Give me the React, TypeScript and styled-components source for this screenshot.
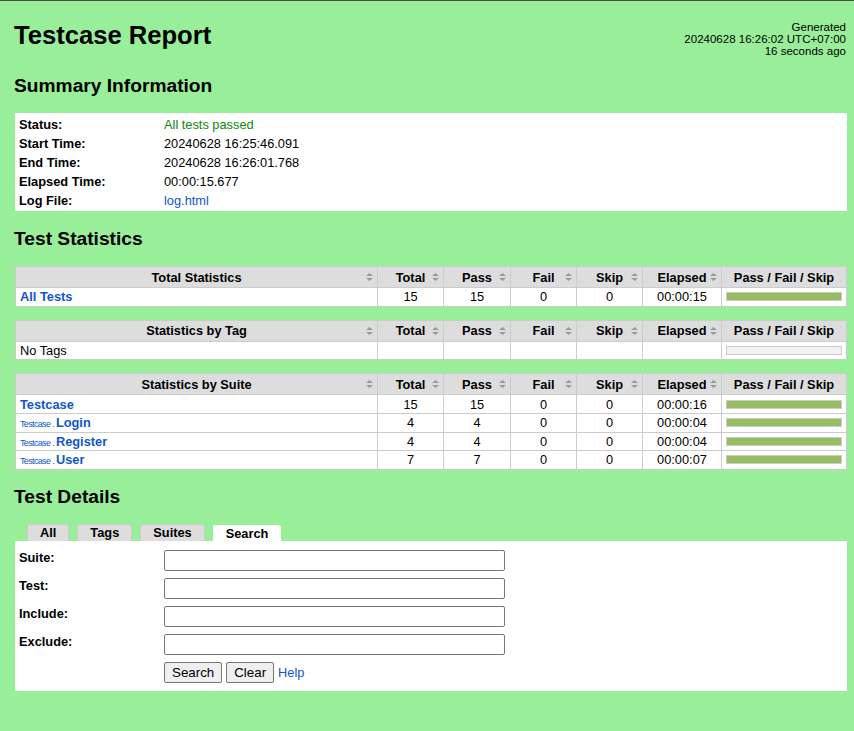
import React from 'react';
import styled, { createGlobalStyle } from 'styled-components';

/*
 * Styles.
 */

const GlobalStyle = createGlobalStyle`
  html, body {
    margin: 0;
    padding: 0;
    background: #99ee99;
  }

  body {
    font-family: "Liberation Sans", Helvetica, Arial, sans-serif;
    font-size: 12.8px;
    color: #000;
  }
`;

const Page = styled.div`
  min-height: 731px;
  box-sizing: border-box;
  border-top: 1px solid #4a4a4a;
  padding: 19px 8px 40px 14px;
`;

const Header = styled.header`
  display: flex;
  justify-content: space-between;
  align-items: flex-start;
`;

const Title = styled.h1`
  margin: 0;
  font-size: 25.6px;
  line-height: 30px;
  font-weight: bold;
`;

const Generated = styled.div`
  margin-top: 1px;
  font-size: 11.52px;
  line-height: 12px;
  text-align: right;
  white-space: nowrap;
`;

const Heading = styled.h2<{ $top?: number; $bottom?: number }>`
  margin: ${(p) => p.$top ?? 17}px 0 ${(p) => p.$bottom ?? 16}px 0;
  font-size: 19.2px;
  line-height: 22px;
  font-weight: bold;
`;

const Link = styled.a`
  color: #15c;
  text-decoration: none;
  cursor: pointer;
`;

const Summary = styled.div`
  width: 832px;
  margin-left: 1px;
  padding: 2px 0 1px 0;
  background: #fff;
  display: grid;
  grid-template-columns: 149px auto;
`;

const SummaryLabel = styled.div`
  padding-left: 4px;
  font-weight: bold;
  line-height: 19px;
`;

const SummaryValue = styled.div<{ $pass?: boolean }>`
  line-height: 19px;
  color: ${(p) => (p.$pass ? '#098a09' : '#000')};
`;

const StatsTable = styled.table`
  width: 832px;
  margin: 0 0 12.8px 1px;
  border-collapse: collapse;
  table-layout: fixed;
  background: #fff;
  font-size: 12.8px;
`;

const HeadCell = styled.th`
  position: relative;
  background: #ddd;
  border: 1px solid #ccc;
  padding: 2.56px 4px;
  line-height: 15px;
  font-weight: bold;
  text-align: center;
  white-space: nowrap;
  overflow: hidden;
`;

const SortIcon = styled.svg`
  position: absolute;
  right: 4px;
  top: 50%;
  margin-top: -4px;
  width: 7px;
  height: 8px;
`;

const Cell = styled.td<{ $center?: boolean }>`
  border: 1px solid #ccc;
  padding: 1.33px 4px;
  line-height: 15px;
  vertical-align: middle;
  text-align: ${(p) => (p.$center ? 'center' : 'left')};
  white-space: nowrap;
`;

const StatName = styled(Link)`
  font-weight: bold;
`;

const ParentName = styled.span`
  font-size: 8.96px;
  line-height: 1;
  letter-spacing: -0.07em;
  font-weight: normal;
`;

const Graph = styled.div<{ $empty?: boolean }>`
  display: flex;
  height: 7px;
  border: 1px solid #ccc;
  background: ${(p) => (p.$empty ? '#f2f2f2' : '#ce3e01')};
`;

const PassBar = styled.div`
  height: 100%;
  background: #97bd61;
`;

const TabBar = styled.div`
  display: flex;
  align-items: flex-end;
  gap: 8px;
  height: 17px;
  margin-left: 1px;
  padding-left: 12px;
`;

const Tab = styled.div<{ $active?: boolean }>`
  box-sizing: border-box;
  height: ${(p) => (p.$active ? 16 : 17)}px;
  padding: 0 12px;
  border: 1px solid ${(p) => (p.$active ? '#fff' : '#ccc')};
  border-bottom: none;
  border-radius: 3px 3px 0 0;
  background: ${(p) => (p.$active ? '#fff' : '#ddd')};
  font-weight: bold;
  line-height: 15px;
  cursor: pointer;
`;

const Panel = styled.div`
  width: 832px;
  margin-left: 1px;
  padding: 9px 0 8px 0;
  background: #fff;
  display: grid;
  grid-template-columns: 149px auto;
  row-gap: 7px;
`;

const FieldLabel = styled.label`
  padding-left: 4px;
  font-weight: bold;
  line-height: 15px;
  align-self: start;
`;

const Input = styled.input`
  box-sizing: border-box;
  width: 341px;
  height: 21px;
  margin: 0;
  padding: 1px 2px;
  border: 1px solid #767676;
  border-radius: 2px;
  font-family: "Liberation Sans", Arial, sans-serif;
  font-size: 13.33px;
  background: #fff;
`;

const Actions = styled.div`
  grid-column: 2;
  display: flex;
  align-items: center;
  gap: 4px;
`;

const Button = styled.button`
  box-sizing: border-box;
  height: 21px;
  margin: 0;
  padding: 1px 7px;
  border: 1px solid #767676;
  border-radius: 2px;
  background: #efefef;
  color: #000;
  font-family: "Liberation Sans", Arial, sans-serif;
  font-size: 13.33px;
  line-height: 17px;
`;

/*
 * Data.
 */

type Stat = {
  parent?: string;
  name: string;
  link?: boolean;
  total?: number;
  pass?: number;
  fail?: number;
  skip?: number;
  elapsed?: string;
};

const totalStats: Stat[] = [
  { name: 'All Tests', link: true, total: 15, pass: 15, fail: 0, skip: 0, elapsed: '00:00:15' }
];

const tagStats: Stat[] = [{ name: 'No Tags' }];

const suiteStats: Stat[] = [
  { name: 'Testcase', link: true, total: 15, pass: 15, fail: 0, skip: 0, elapsed: '00:00:16' },
  { parent: 'Testcase', name: 'Login', link: true, total: 4, pass: 4, fail: 0, skip: 0, elapsed: '00:00:04' },
  { parent: 'Testcase', name: 'Register', link: true, total: 4, pass: 4, fail: 0, skip: 0, elapsed: '00:00:04' },
  { parent: 'Testcase', name: 'User', link: true, total: 7, pass: 7, fail: 0, skip: 0, elapsed: '00:00:07' }
];

/*
 * Components.
 */

function Sort() {
  return (
    <SortIcon viewBox="0 0 7 8">
      <polygon points="0,3 3.5,0 7,3" fill="#999" />
      <polygon points="0,5 3.5,8 7,5" fill="#999" />
    </SortIcon>
  );
}

function StatsBlock({ title, rows }: { title: string; rows: Stat[] }) {
  return (
    <StatsTable>
      <colgroup>
        <col />
        <col style={{ width: 66 }} />
        <col style={{ width: 67 }} />
        <col style={{ width: 66 }} />
        <col style={{ width: 66 }} />
        <col style={{ width: 79 }} />
        <col style={{ width: 125 }} />
      </colgroup>
      <thead>
        <tr>
          <HeadCell>{title}<Sort /></HeadCell>
          <HeadCell>{'Total'}<Sort /></HeadCell>
          <HeadCell>{'Pass'}<Sort /></HeadCell>
          <HeadCell>{'Fail'}<Sort /></HeadCell>
          <HeadCell>{'Skip'}<Sort /></HeadCell>
          <HeadCell>{'Elapsed'}<Sort /></HeadCell>
          <HeadCell>{'Pass / Fail / Skip'}</HeadCell>
        </tr>
      </thead>
      <tbody>
        {rows.map((row) => (
          <tr key={`${row.parent ?? ''}${row.name}`}>
            <Cell>
              {row.link ? (
                <StatName>
                  {row.parent && <ParentName>{`${row.parent} . `}</ParentName>}
                  {row.name}
                </StatName>
              ) : (
                row.name
              )}
            </Cell>
            <Cell $center>{row.total}</Cell>
            <Cell $center>{row.pass}</Cell>
            <Cell $center>{row.fail}</Cell>
            <Cell $center>{row.skip}</Cell>
            <Cell $center>{row.elapsed}</Cell>
            <Cell>
              {row.total ? (
                <Graph>
                  <PassBar style={{ width: `${((row.pass ?? 0) / row.total) * 100}%` }} />
                </Graph>
              ) : (
                <Graph $empty />
              )}
            </Cell>
          </tr>
        ))}
      </tbody>
    </StatsTable>
  );
}

export default function App() {
  return (
    <>
      <GlobalStyle />
      <Page>
        <Header>
          <Title>{'Testcase Report'}</Title>
          <Generated>
            {'Generated'}
            <br />
            {'20240628 16:26:02 UTC+07:00'}
            <br />
            {'16 seconds ago'}
          </Generated>
        </Header>

        <Heading $top={18}>{'Summary Information'}</Heading>
        <Summary>
          <SummaryLabel>{'Status:'}</SummaryLabel>
          <SummaryValue $pass>{'All tests passed'}</SummaryValue>
          <SummaryLabel>{'Start Time:'}</SummaryLabel>
          <SummaryValue>{'20240628 16:25:46.091'}</SummaryValue>
          <SummaryLabel>{'End Time:'}</SummaryLabel>
          <SummaryValue>{'20240628 16:26:01.768'}</SummaryValue>
          <SummaryLabel>{'Elapsed Time:'}</SummaryLabel>
          <SummaryValue>{'00:00:15.677'}</SummaryValue>
          <SummaryLabel>{'Log File:'}</SummaryLabel>
          <SummaryValue><Link>{'log.html'}</Link></SummaryValue>
        </Summary>

        <Heading>{'Test Statistics'}</Heading>
        <StatsBlock title="Total Statistics" rows={totalStats} />
        <StatsBlock title="Statistics by Tag" rows={tagStats} />
        <StatsBlock title="Statistics by Suite" rows={suiteStats} />

        <Heading $top={16}>{'Test Details'}</Heading>
        <TabBar>
          <Tab>{'All'}</Tab>
          <Tab>{'Tags'}</Tab>
          <Tab>{'Suites'}</Tab>
          <Tab $active>{'Search'}</Tab>
        </TabBar>
        <Panel>
          <FieldLabel>{'Suite:'}</FieldLabel>
          <Input type="text" />
          <FieldLabel>{'Test:'}</FieldLabel>
          <Input type="text" />
          <FieldLabel>{'Include:'}</FieldLabel>
          <Input type="text" />
          <FieldLabel>{'Exclude:'}</FieldLabel>
          <Input type="text" />
          <Actions>
            <Button type="button">{'Search'}</Button>
            <Button type="button">{'Clear'}</Button>
            <Link>{'Help'}</Link>
          </Actions>
        </Panel>
      </Page>
    </>
  );
}
